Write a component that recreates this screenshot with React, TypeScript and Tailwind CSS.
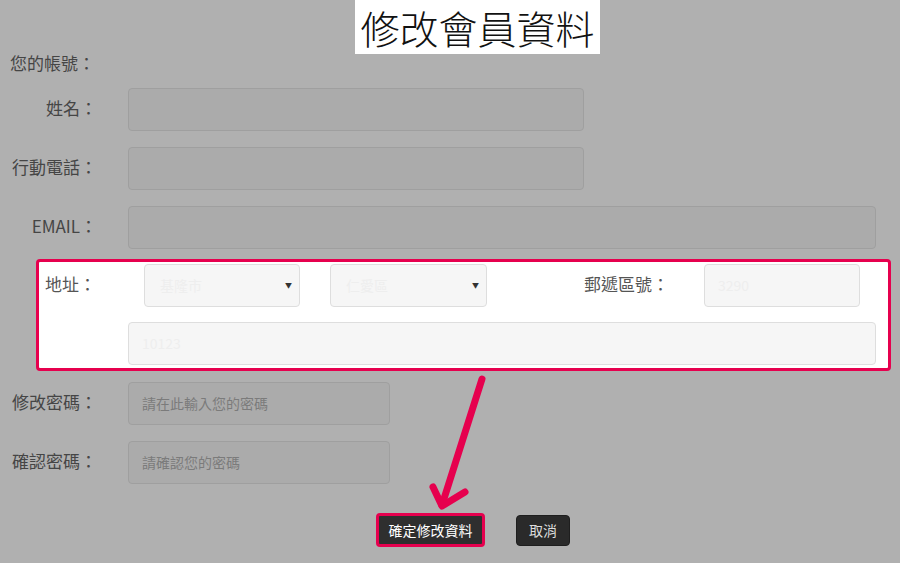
const font = { fontFamily: '"Noto Sans CJK TC", "Liberation Sans", sans-serif' };

function Label({ text }: { text: string }) {
  return <div className="ml-[10px] w-[87px] -mt-[4px] text-right text-[17px] text-[#454545]">{text}</div>;
}

function GrayInput({ w, placeholder }: { w: string; placeholder?: string }) {
  return (
    <div className={`${w} h-[43px] rounded-[4px] border border-[#9f9f9f] bg-[#ababab] flex items-center pl-[13px] text-[14px] text-[#7b7b7b]`}>
      {placeholder}
    </div>
  );
}

function Select({ w, value }: { w: string; value: string }) {
  return (
    <div className={`${w} h-[43px] rounded-[4px] border border-[#dedede] bg-[#f6f6f6] flex items-center justify-between px-[15px] pr-[7px] text-[14px] text-[#eeeeee]`}>
      <span>{value}</span>
      <span className="text-[7px] text-[#333]">▼</span>
    </div>
  );
}

export default function App() {
  return (
    <div className="relative w-[900px] h-[563px] overflow-hidden bg-[#b0b0b0]" style={font}>
      {/* Title */}
      <div className="flex">
        <div className="ml-[355px] h-[54px] w-[245px] bg-white flex items-center justify-center whitespace-nowrap text-[39px] font-light text-[#111] leading-none">修改會員資料</div>
      </div>

      {/* Account */}
      <div className="h-[18px] flex items-center">
        <div className="ml-[10px] text-[17px] text-[#454545]">您的帳號：</div>
      </div>

      <div className="mt-[16px] flex flex-col gap-[16px]">
        <div className="flex items-center gap-[31px]">
          <Label text="姓名：" />
          <GrayInput w="w-[456px]" />
        </div>
        <div className="flex items-center gap-[31px]">
          <Label text="行動電話：" />
          <GrayInput w="w-[456px]" />
        </div>
        <div className="flex items-center gap-[31px]">
          <Label text="EMAIL：" />
          <GrayInput w="w-[748px]" />
        </div>
      </div>

      {/* Address highlight */}
      <div className="mt-[10px] ml-[36px] w-[855px] h-[112px] rounded-[4px] border-[3px] border-[#e6004e] bg-white pt-[2px]">
        <div className="flex items-start">
          <div className="ml-[6px] mt-[7px] w-[60px] text-[17px] text-[#555]">地址：</div>
          <div className="ml-[39px]"><Select w="w-[156px]" value="基隆市" /></div>
          <div className="ml-[30px]"><Select w="w-[157px]" value="仁愛區" /></div>
          <div className="ml-[97px] mt-[7px] w-[100px] text-[17px] text-[#555]">郵遞區號：</div>
          <div className="ml-[20px] w-[156px] h-[43px] rounded-[4px] border border-[#dedede] bg-[#f6f6f6] flex items-center pl-[13px] text-[14px] text-[#eeeeee]">3290</div>
        </div>
        <div className="mt-[15px] ml-[89px] w-[748px] h-[43px] rounded-[4px] border border-[#dedede] bg-[#f6f6f6] flex items-center pl-[13px] text-[14px] text-[#eeeeee]">10123</div>
      </div>

      <div className="mt-[11px] flex flex-col gap-[16px]">
        <div className="flex items-center gap-[31px]">
          <Label text="修改密碼：" />
          <GrayInput w="w-[262px]" placeholder="請在此輸入您的密碼" />
        </div>
        <div className="flex items-center gap-[31px]">
          <Label text="確認密碼：" />
          <GrayInput w="w-[262px]" placeholder="請確認您的密碼" />
        </div>
      </div>

      {/* Buttons */}
      <div className="mt-[29px] flex items-center">
        <div className="ml-[376px] w-[109px] h-[34px] rounded-[4px] border-[3px] border-[#e6004e] bg-[#2f2f2f] flex items-center justify-center text-[14px] text-white">確定修改資料</div>
        <div className="ml-[31px] w-[54px] h-[31px] rounded-[4px] border border-[#1e1e1e] bg-[#2a2a2a] flex items-center justify-center text-[14px] text-[#ddd]">取消</div>
      </div>

      {/* Arrow */}
      <svg className="absolute left-0 top-0 pointer-events-none" width="900" height="563" viewBox="0 0 900 563">
        <g stroke="#e6004e" strokeWidth="7" strokeLinecap="round" strokeLinejoin="round" fill="none">
          <path d="M482 379 L442 505" />
          <path d="M433 487 L442 506 L465 492" />
        </g>
      </svg>
    </div>
  );
}
